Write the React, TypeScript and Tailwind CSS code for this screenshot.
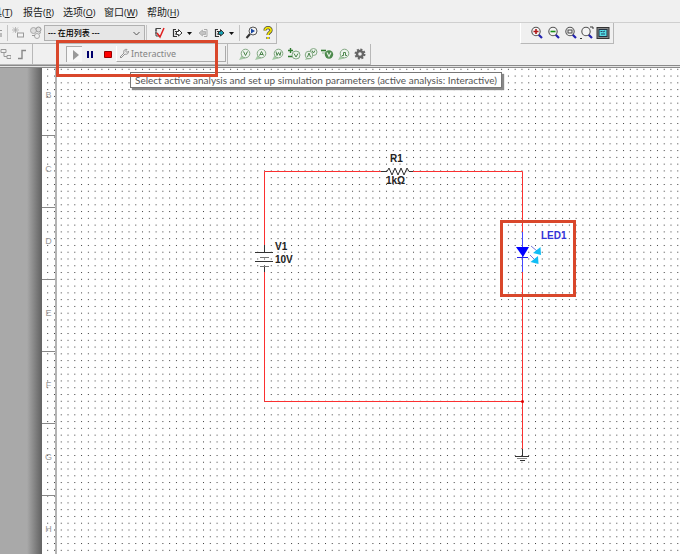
import React from "react";

type IconProps = { children: React.ReactNode; w?: number; h?: number };

function Glyph({ children, w = 14, h = 14 }: IconProps) {
  return (
    <svg width={w} height={h} viewBox={`0 0 ${w} ${h}`} fill="none" aria-hidden="true" className="shrink-0">
      {children}
    </svg>
  );
}

function ToolButton({ label, className = "w-4", children }: { label: string; className?: string; children: React.ReactNode }) {
  return (
    <button type="button" aria-label={label} className={`flex h-4 shrink-0 items-center justify-center ${className}`}>
      {children}
    </button>
  );
}

function Divider() {
  return <span className="h-4 w-px shrink-0 bg-[#c4c4c4]" />;
}

function Menu({ text, hotkey, className = "" }: { text: string; hotkey: string; className?: string }) {
  return (
    <button type="button" className={`shrink-0 whitespace-nowrap ${className}`}>
      {text}
      <span className="text-[9px]">
        (<span className="underline">{hotkey}</span>)
      </span>
    </button>
  );
}

function Magnifier({ children }: { children?: React.ReactNode }) {
  return (
    <Glyph>
      <path d="M8.5 8.5 12 12" stroke="#2222b0" strokeWidth="2.2" />
      <circle cx="6" cy="5.5" r="4.2" fill="#f4f4f4" stroke="#555" strokeWidth="1.1" />
      {children}
    </Glyph>
  );
}

function Probe({ children }: { children?: React.ReactNode }) {
  return (
    <Glyph>
      <path d="M1 13 4 7.5 7.500 11.500z" fill="#a5c9a5" />
      <circle cx="7.500" cy="6.500" r="4.3" fill="#edf3ed" stroke="#84a984" />
      {children}
    </Glyph>
  );
}

function CopyArrow({ arrow }: { arrow: string }) {
  return (
    <Glyph w={11} h={10}>
      <path d="M4 1.5H1.5v7H5M3 3.5h2M3 6h2" stroke="#333" strokeWidth="1.2" />
      <path d="M4.5 3.5h2v-2L10 5 6.5 8V6.5h-2z" fill={arrow} stroke="#333" />
    </Glyph>
  );
}

function Caret() {
  return (
    <Glyph w={5} h={3}>
      <path d="M0 0h5L2.500 3z" fill="#111" />
    </Glyph>
  );
}

function Toolbars() {
  return (
    <header className="shrink-0 bg-[#f0f0f0]">
      <nav className="flex h-[22px] items-center overflow-hidden pt-0.5 text-[10px] text-[#222]">
        <Menu text="具" hotkey="T" className="-ml-2 w-[31px] text-left" />
        <Menu text="报告" hotkey="R" className="w-10 text-left" />
        <Menu text="选项" hotkey="O" className="w-[41px] text-left" />
        <Menu text="窗口" hotkey="W" className="w-[43px] text-left" />
        <Menu text="帮助" hotkey="H" />
      </nav>

      <div className="flex h-[22px] border-t border-[#cfcfcf]">
        <div className="flex w-[277px] shrink-0 items-center border-r border-b border-[#b8b8b8]">
          <span className="flex w-[7px] shrink-0 flex-col gap-0.5">
            <span className="h-px w-0.5 bg-[#999]" />
            <span className="h-1 w-0.5 bg-[#bbb]" />
          </span>
          <Divider />
          <ToolButton label="Place component" className="w-5">
            <Glyph>
              <path d="M4.500 1v6M1 4h7M2 1.500l5 5M7 1.500l-5 5" stroke="#aaa" strokeWidth="0.8" />
              <rect x="6.500" y="7" width="6" height="4" fill="#f4f4f4" stroke="#999" />
            </Glyph>
          </ToolButton>
          <ToolButton label="Component list">
            <Glyph>
              <circle cx="4.500" cy="4.500" r="3" fill="#ddd" stroke="#aaa" />
              <circle cx="9.500" cy="3.500" r="2.500" fill="#ddd" stroke="#999" />
              <circle cx="8" cy="10" r="2.500" stroke="#aaa" />
              <path d="M3 9.500h3M10 7.500l2-1" stroke="#999" />
            </Glyph>
          </ToolButton>
          <select
            aria-label="在用列表"
            defaultValue="used"
            className="h-4 w-[101px] shrink-0 appearance-none rounded-none border border-[#b0b0b0] bg-[#e6e6e6] pl-[3px] text-[8px] leading-[14px] font-medium text-black"
          >
            <option value="used">--- 在用列表 ---</option>
          </select>
          <span className="pointer-events-none -ml-3 mr-1.5 shrink-0">
            <Glyph w={7} h={5}>
              <path d="M.5 1 3.500 4l3-3" stroke="#555" />
            </Glyph>
          </span>
          <Divider />
          <ToolButton label="Check rules" className="ml-1 w-4">
            <Glyph>
              <path d="M4 2.500h5M4 2v8h4M3 4h2M3 7h2" stroke="#444" />
              <path d="m5 7 3 4 4-9" stroke="#e02020" strokeWidth="1.5" />
            </Glyph>
          </ToolButton>
          <ToolButton label="Transfer" className="ml-1 w-3">
            <CopyArrow arrow="#fff" />
          </ToolButton>
          <ToolButton label="Transfer options" className="w-3">
            <Caret />
          </ToolButton>
          <ToolButton label="Back annotate">
            <Glyph w={10} h={10}>
              <path d="M6 1.500h3v7H6" stroke="#aaa" />
              <path d="M1 5 4.500 2v1.500h3v3h-3V8z" fill="#c4c4c4" stroke="#aaa" strokeWidth="0.8" />
            </Glyph>
          </ToolButton>
          <ToolButton label="Forward annotate">
            <CopyArrow arrow="#16a3b6" />
          </ToolButton>
          <ToolButton label="Annotate options" className="mr-1 w-2">
            <Caret />
          </ToolButton>
          <Divider />
          <ToolButton label="Find examples" className="ml-1 w-4">
            <Glyph>
              <path d="M5 8 1.500 12" stroke="#333" strokeWidth="2" />
              <circle cx="8" cy="5" r="4" fill="#f4f4f4" stroke="#555" />
              <path d="M6 2.500 10 5 6 7.500z" fill="#1746a2" />
            </Glyph>
          </ToolButton>
          <ToolButton label="Help">
            <Glyph>
              <path d="M4 4.500C4 .5 10.500 1 10 4.500 9.500 6.500 7 6.500 7 9m0 2v2" stroke="#444" strokeWidth="3.2" />
              <path d="M4 4.500C4 .5 10.500 1 10 4.500 9.500 6.500 7 6.500 7 9m0 2v2" stroke="#f3e500" strokeWidth="1.8" />
            </Glyph>
          </ToolButton>
        </div>
        <div className="ml-[243px] flex w-[94px] shrink-0 items-center border-r border-b border-l border-[#b8b8b8] border-l-white pl-[7px]">
          <ToolButton label="Zoom in" className="w-[17px]">
            <Magnifier>
              <path d="M6 3v5M3.500 5.500h5" stroke="#b01818" strokeWidth="1.600" />
            </Magnifier>
          </ToolButton>
          <ToolButton label="Zoom out" className="w-[17px]">
            <Magnifier>
              <path d="M3.500 5.500h5" stroke="#159015" strokeWidth="1.600" />
            </Magnifier>
          </ToolButton>
          <ToolButton label="Zoom area" className="w-[17px]">
            <Magnifier>
              <rect x="4" y="4" width="4" height="3" stroke="#444" />
            </Magnifier>
          </ToolButton>
          <ToolButton label="Zoom sheet">
            <Magnifier>
              <path d="M0 12.500h2M10 1h3v2" stroke="#333" />
            </Magnifier>
          </ToolButton>
          <ToolButton label="Full screen">
            <Glyph>
              <rect x="1" y="1.500" width="12" height="11" fill="#888" stroke="#333" />
              <rect x="3" y="3.500" width="8" height="7" fill="#55dce4" stroke="#234" />
              <path d="M4.500 5.500h2M5 8h4M9 5l-2 1" stroke="#246" />
            </Glyph>
          </ToolButton>
        </div>
      </div>

      <div className="flex h-[21px]">
        <div className="flex w-[33px] shrink-0 items-center border-r border-b border-[#b8b8b8]">
          <ToolButton label="Hierarchical block" className="-ml-1 w-4">
            <Glyph>
              <path d="M4 2.500h5v3H4zm3 3v4h3m0-1h4v3h-4z" stroke="#999" />
            </Glyph>
          </ToolButton>
          <ToolButton label="Bus" className="ml-0.5 w-4">
            <Glyph>
              <path d="M3 11.500h4v-8h4" stroke="#888" strokeWidth="1.4" />
            </Glyph>
          </ToolButton>
        </div>
        <div className="flex w-[195px] shrink-0 items-center border-r border-b border-[#b8b8b8] pl-[33px]">
          <button type="button" aria-label="Run" className="flex h-4 w-4 shrink-0 items-center justify-center border-t border-l border-[#aaa] bg-[#f7f7f7] pl-0.5">
            <Glyph w={6} h={10}>
              <path d="M0 0v10l6-5z" fill="#999" />
            </Glyph>
          </button>
          <ToolButton label="Pause" className="w-[17px]">
            <Glyph w={7} h={7}>
              <path d="M0 0h2v7H0zM4 0h2v7H4z" fill="#00006c" />
            </Glyph>
          </ToolButton>
          <ToolButton label="Stop" className="w-[17px]">
            <Glyph w={8} h={7}>
              <path d="M.5.5h7v6h-7z" fill="#f00" stroke="#900" />
            </Glyph>
          </ToolButton>
          <button
            type="button"
            className="flex h-4 w-[110px] shrink-0 items-center gap-0.5 border-r border-b border-l border-[#aaa] border-l-white pl-0.5 text-[9px] text-[#848484]"
          >
            <Glyph w={10} h={11}>
              <path d="m1 9 4-4C4 2.500 6 .8 8 1.500L6.500 3 8 4.500 9.500 3C10 5 8 7 6 6l-4 4z" stroke="#888" strokeWidth="0.9" />
            </Glyph>
            Interactive
          </button>
        </div>
        <div className="flex w-[143px] shrink-0 items-center justify-between border-r border-b border-[#b8b8b8] pr-0.5 pl-[9px]">
          <ToolButton label="Voltage probe">
            <Probe>
              <path d="m5.500 4.500 2 4 2-4" stroke="#4d854d" />
            </Probe>
          </ToolButton>
          <ToolButton label="Current probe">
            <Probe>
              <path d="m5.500 8.500 2-4 2 4M6 7.500h3" stroke="#4d854d" />
            </Probe>
          </ToolButton>
          <ToolButton label="Power probe">
            <Probe>
              <path d="m5 4.500 1 4 1.500-3 1.500 3 1-4" stroke="#4d854d" />
            </Probe>
          </ToolButton>
          <ToolButton label="Differential probe">
            <Glyph>
              <path d="M3.500 1v5M1 3.500h5M1 9.500h4" stroke="#2f7a2f" strokeWidth="1.4" />
              <circle cx="9" cy="8" r="4" fill="#edf3ed" stroke="#84a984" />
              <path d="m7 6.500 2 3.500 2-3.500" stroke="#4d854d" />
            </Glyph>
          </ToolButton>
          <ToolButton label="Voltage and current probe">
            <Glyph>
              <path d="M1 13 3 9l3 3z" fill="#a5c9a5" />
              <circle cx="9.500" cy="5" r="3.500" fill="#edf3ed" stroke="#84a984" />
              <circle cx="5" cy="8" r="3.800" fill="#edf3ed" stroke="#84a984" />
              <path d="m3.500 10 1.500-4 1.500 4M8 3.500 9.500 6 11 3.500" stroke="#4d854d" />
            </Glyph>
          </ToolButton>
          <ToolButton label="Reference probe">
            <Glyph>
              <path d="M1 3.500h5" stroke="#2f7a2f" strokeWidth="1.6" />
              <path d="M2 6h4" stroke="#8fb98f" />
              <circle cx="9" cy="7.500" r="4.200" fill="#4d8a4d" />
              <path d="m7 5.500 2 4 2-4" stroke="#e4f0e4" strokeWidth="1.2" />
            </Glyph>
          </ToolButton>
          <ToolButton label="Digital probe">
            <Probe>
              <path d="M5 8.500h1.500v-3h2v3H10" stroke="#4d854d" />
            </Probe>
          </ToolButton>
          <ToolButton label="Probe settings">
            <Glyph>
              <circle cx="7" cy="7" r="4.500" stroke="#666" strokeWidth="2" strokeDasharray="2 1.500" />
              <circle cx="7" cy="7" r="3" stroke="#666" strokeWidth="2.4" />
            </Glyph>
          </ToolButton>
        </div>
      </div>
      <div className="h-[3px] border-y border-[#8a8a8a] bg-[#e4e4e4]" />
    </header>
  );
}

const rulerRows = ["C", "D", "E", "F", "G", "H"];

function RowRuler() {
  return (
    <div className="relative w-4 shrink-0 border-r-2 border-l border-[#b4b4b4] border-l-[#666] text-center font-['Liberation_Sans',sans-serif] text-[9px] text-[#999]">
      <div className="flex h-[68px] items-center justify-center border-b border-[#888] pb-3">B</div>
      {rulerRows.map((row) => (
        <div key={row} className="flex h-[72px] items-center justify-center border-b border-[#888] pb-1">
          {row}
        </div>
      ))}
    </div>
  );
}

function DotGrid() {
  return (
    <svg className="absolute inset-0 h-full w-full" aria-hidden="true">
      <defs>
        <pattern id="dots" x="6.2" y="0.8" width="6.775" height="6.775" patternUnits="userSpaceOnUse">
          <rect width="1" height="1" fill="#3a3a3a" />
        </pattern>
      </defs>
      <rect width="100%" height="100%" fill="url(#dots)" />
    </svg>
  );
}

/* Coordinates start at the sheet's upper left corner, right of the ruler. */
function Circuit() {
  return (
    <svg
      className="absolute inset-0 h-full w-full overflow-visible font-['Liberation_Sans',sans-serif] text-[10px] font-bold"
      fill="none"
      role="img"
      aria-label="Circuit"
    >
      <g stroke="#fb3030">
        <path d="M207.500 177V103.500H324M356 103.500H465.500V164M207.500 204V333.500H465.500M465.500 204V381" />
      </g>
      <circle cx="465.500" cy="333.500" r="1.500" fill="#d00" />
      <g stroke="#333">
        <path d="M207.500 177v8M198 184.500h18M198 193.500h18M207.500 198v6" />
        <path d="M203 189.500h9M203 198.500h9" stroke="#777" />
        <path d="M324 103.500h6l2-3.500 3 7 3-7 3 7 3-7 3 7 3-7 2 3.500h4" />
        <path d="M465.500 381v7M458 388.500h14" />
        <path d="M460 390.500h10" stroke="#888" />
        <path d="M463 392.500h5" />
      </g>
      <path d="M465.500 164v40" stroke="#4545ff" />
      <path d="M459 179h13l-6 10z" fill="#00f" />
      <path d="M460 189.500h11" stroke="#2222e8" />
      <path d="m474 178 6 5M473 187l5 5" stroke="#7777dd" />
      <path d="m483.500 179 .5 8-8-2zM481 188l.5 8-8-2z" fill="#10bdf5" />
      <g fill="#222">
        <text x="333" y="94">R1</text>
        <text x="329" y="116">1kΩ</text>
        <text x="218" y="182">V1</text>
        <text x="218" y="195">10V</text>
        <text x="484" y="171" fill="#3333d8">LED1</text>
      </g>
    </svg>
  );
}

export default function App() {
  return (
    <div className="relative flex h-screen flex-col overflow-hidden bg-white font-['Noto_Sans','Noto_Sans_CJK_SC',sans-serif]">
      <Toolbars />
      <main className="flex min-h-0 flex-1">
        <div className="flex w-[41px] shrink-0 bg-[#a9a9a9]">
          <div className="ml-auto w-3.5 bg-linear-to-r from-[#a9a9a9] to-[#666]" />
        </div>
        <div className="relative flex min-w-0 flex-1 overflow-hidden">
          <DotGrid />
          <RowRuler />
          <div className="relative flex-1">
            <Circuit />
          </div>
        </div>
      </main>

      <div
        role="tooltip"
        className="absolute top-[72px] left-[130px] flex h-4 items-center border border-[#777] bg-white px-1 font-['Lato',sans-serif] text-[10px] whitespace-nowrap text-[#555] shadow-[2px_2px_1px_#888]"
      >
        Select active analysis and set up simulation parameters (active analysis: Interactive)
      </div>
      <div className="pointer-events-none absolute top-10 left-14 h-[37px] w-[162px] border-3 border-[#d9472b]" />
      <div className="pointer-events-none absolute top-[220px] left-[500px] h-[77px] w-[76px] border-3 border-[#d9472b]" />
    </div>
  );
}
